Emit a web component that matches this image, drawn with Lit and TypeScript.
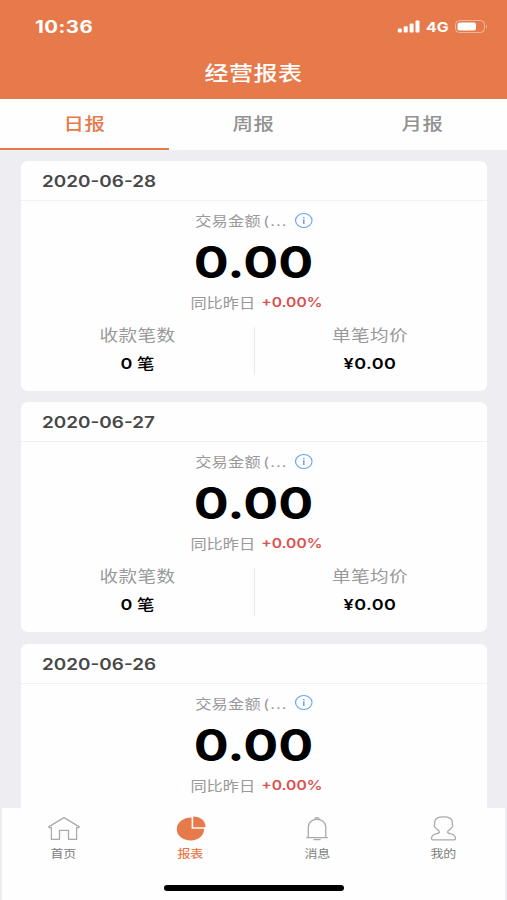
import { LitElement, html, svg, css, nothing } from "lit";
import { customElement, property } from "lit/decorators.js";

const icons: Record<string, unknown> = {
  home: svg`<path d="M3 11.7V10.6L18 1.6L33 10.6V11.7H30.6V23.4H22.5V14.4H13.5V23.4H5.4V11.7Z" />`,
  chart: svg`<g fill="currentColor" stroke="none"><path d="M18.6 1.6V12.8H31.1C31.1 19.6 25.8 24.4 17.8 24.4C9.6 24.4 3.8 19.5 3.8 13.2C3.8 6.4 10.2 1.6 18.6 1.6Z" /><path d="M20.2 .6C27.2 .6 32.9 5 32.4 11.2H20.2Z" /></g>`,
  bell: svg`<path d="M8.3 21.7V11.2C8.3 6.5 12 3.3 17 3.3S25.8 6.5 25.8 11.2V21.7M6.2 21.7H27.8M15 3.3Q15 1.6 17 1.6T19 3.3M13.5 23.7H20.6" />`,
  user: svg`<path d="M16.5.8C22 .8 25.3 2.6 25.3 6V8.4C26.4 8.8 25.7 11 24.6 11.5C23.8 13 22.2 14 20.8 15.2C20 16.6 21.5 17.4 23.9 17.8C27.3 18.6 28.5 20 28.5 22.4Q28.5 23.8 27.1 23.8H5.9Q4.5 23.8 4.5 22.4C4.5 20 5.7 18.6 9.1 17.8C11.5 17.4 13 16.6 12.2 15.2C10.8 14 9.2 13 8.4 11.5C7.3 11 6.6 8.8 7.7 8.4V6C7.7 2.6 11 .8 16.5.8Z" />`,
};

interface Report {
  date: string;
  count?: string;
  average?: string;
}

@customElement("report-card")
class ReportCard extends LitElement {
  @property({ attribute: false }) report: Report = { date: "" };

  static styles = css`
    :host {
      display: block;
      flex: none;
      height: 229.5px;
      background: #fefefe;
      border-radius: 7px / 6px;
      text-align: center;
    }
    .head {
      height: 39px;
      line-height: 41px;
      padding-left: 21px;
      border-bottom: 1px solid #f1f1f3;
      text-align: left;
      font-size: 15.5px;
      font-weight: 600;
      color: #484848;
    }
    .date { display: inline-block; transform: scaleX(1.22); transform-origin: left; }
    .row {
      display: flex;
      justify-content: center;
      align-items: center;
      transform: scaleX(1.2);
      color: #999;
    }
    .amount { height: 38px; padding-bottom: 2px; font-size: 13.5px; gap: 6px; letter-spacing: .2px; }
    .ell { letter-spacing: .9px; margin-left: 2px; }
    .amount svg { width: 15px; height: 15px; }
    .total {
      height: 42px;
      line-height: 42px;
      margin-left: -1px;
      font-size: 44px;
      font-weight: 700;
      color: #000;
      transform: scaleX(1.18);
    }
    .compare { height: 38px; padding: 0 0 2px 4px; font-size: 13.5px; gap: 5px; }
    .rate { color: #d9534f; font-weight: 600; font-size: 13px; }
    .cells { display: flex; height: 48px; margin-top: 4px; }
    .cell { flex: none; width: 50%; box-sizing: border-box; }
    .cell + .cell { border-left: 1px solid #e9e9eb; padding-right: 2px; }
    .name, .value { transform: scaleX(1.2); }
    .name { font-size: 15.5px; line-height: 18px; color: #999; letter-spacing: .3px; }
    .value { margin-top: 9.5px; font-size: 15px; line-height: 18px; font-weight: 600; color: #000; letter-spacing: .4px; }
    .value.count { font-weight: 500; font-size: 14.5px; letter-spacing: 0; }
    .value.count b { font-weight: 600; font-size: 15px; }
  `;

  render() {
    const { date, count, average } = this.report;
    return html`
      <div class="head"><span class="date">${date}</span></div>
      <div class="row amount">
        <span>交易金额<span class="ell">(...</span></span>
        <svg viewBox="0 0 15 15" fill="none" stroke="#6aa5f5">
          <circle cx="7.5" cy="7.5" r="6.9" stroke-width="1" />
          <path d="M7.5 6.3V11M7.5 3.9V5.2" stroke-width="1.3" />
        </svg>
      </div>
      <div class="total">0.00</div>
      <div class="row compare"><span>同比昨日</span><span class="rate">+0.00%</span></div>
      ${count
        ? html`<div class="cells">
            <div class="cell"><div class="name">收款笔数</div><div class="value count"><b>${count}</b> 笔</div></div>
            <div class="cell"><div class="name">单笔均价</div><div class="value">${average}</div></div>
          </div>`
        : nothing}
    `;
  }
}

@customElement("app-root")
class AppRoot extends LitElement {
  static styles = css`
    :host {
      display: flex;
      flex-direction: column;
      height: 900px;
      overflow: hidden;
      background: #ededf2;
      font-family: Inter, "Noto Sans CJK SC", sans-serif;
    }
    .top { flex: none; height: 98.5px; background: #e77a4b; color: #fff; }
    .status {
      display: flex;
      align-items: center;
      justify-content: space-between;
      height: 52px;
      padding: 0 19px 0 35px;
    }
    .time { font-size: 17px; padding-top: 1px; font-weight: 700; letter-spacing: .4px; transform: scaleX(1.2); transform-origin: left; }
    .signals { display: flex; align-items: center; }
    .bars { width: 23px; height: 13px; }
    .net { width: 22px; margin: 1px 7px 0 6px; font-size: 13px; font-weight: 700; }
    .net span { display: inline-block; transform: scaleX(1.22); transform-origin: left; }
    .battery { width: 33px; height: 13px; }
    .title {
      text-align: center;
      font-size: 20px;
      line-height: 45px;
      font-weight: 500;
      letter-spacing: .4px;
      transform: scaleX(1.2);
    }
    .tabs { flex: none; display: flex; height: 51px; background: #fefefe; }
    .tab {
      flex: 1;
      box-sizing: border-box;
      text-align: center;
      font-size: 17px;
      line-height: 50px;
      font-weight: 500;
      color: #929292;
      border-bottom: 2px solid transparent;
    }
    .tab span { display: inline-block; letter-spacing: .4px; transform: scaleX(1.2); }
    .tab.on { color: #e77a4b; border-color: #e77a4b; }
    .list {
      flex: 1;
      min-height: 0;
      overflow: hidden;
      display: flex;
      flex-direction: column;
      gap: 11.8px;
      padding: 11.5px 20px 0 21px;
    }
    .bottom {
      flex: none;
      height: 92px;
      margin: 0 2px;
      background: #fefefe;
    }
    nav { display: flex; height: 77px; margin: 0 -2px; }
    .item { flex: 1; padding-top: 8px; text-align: center; color: #808080; }
    .item svg { display: block; width: 34px; height: 26px; margin: 0 auto; stroke: #aaa; }
    .item span {
      display: block;
      font-size: 11px;
      line-height: 25px;
      transform: scaleX(1.18);
    }
    .item.on { color: #e77a4b; font-weight: 500; }
    .indicator { width: 180px; height: 5.5px; margin: 0 auto; border-radius: 3px; background: #000; }
  `;

  render() {
    const tabs = ["日报", "周报", "月报"];
    const reports: Report[] = [
      { date: "2020-06-28", count: "0", average: "¥0.00" },
      { date: "2020-06-27", count: "0", average: "¥0.00" },
      { date: "2020-06-26" },
    ];
    const items = [["home", "首页"], ["chart", "报表"], ["bell", "消息"], ["user", "我的"]];
    return html`
      <div class="top">
        <div class="status">
          <div class="time">10:36</div>
          <div class="signals">
            <svg class="bars" viewBox="0 0 23 13" fill="#fff">
              <rect x="0.8" y="8.5" width="4" height="4" rx="1" />
              <rect x="6.7" y="6.2" width="4" height="6.3" rx="1" />
              <rect x="12.6" y="3.4" width="4" height="9.1" rx="1" />
              <rect x="18.5" y=".5" width="4" height="12" rx="1" />
            </svg>
            <div class="net"><span>4G</span></div>
            <svg class="battery" viewBox="0 0 33 13">
              <rect x=".5" y=".5" width="29" height="12" rx="4" fill="none" stroke="#fff" stroke-opacity=".45" />
              <rect x="2.5" y="2.4" width="18.5" height="8.2" rx="2" fill="#fff" />
              <path d="M31 4.7Q33 6.5 31 8.3Z" fill="#fff" fill-opacity=".5" />
            </svg>
          </div>
        </div>
        <div class="title">经营报表</div>
      </div>
      <div class="tabs">
        ${tabs.map((t, i) => html`<div class="tab ${i === 0 ? "on" : ""}"><span>${t}</span></div>`)}
      </div>
      <div class="list">${reports.map((r) => html`<report-card .report=${r}></report-card>`)}</div>
      <div class="bottom">
        <nav>
          ${items.map(([icon, name]) => html`
            <div class="item ${icon === "chart" ? "on" : ""}">
              <svg viewBox="0 0 34 26" fill="none" stroke-width="1.3" stroke-linejoin="round">${icons[icon]}</svg>
              <span>${name}</span>
            </div>`)}
        </nav>
        <div class="indicator"></div>
      </div>
    `;
  }
}
